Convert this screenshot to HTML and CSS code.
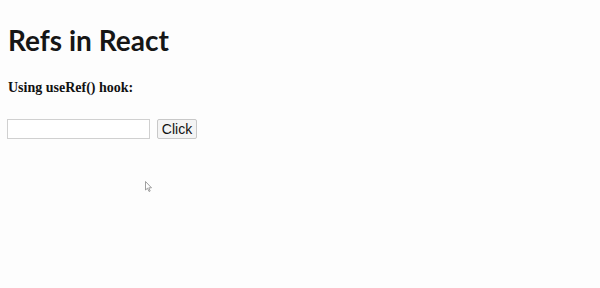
FILE: index.html
```html
<!DOCTYPE html>
<html>
<head>
<meta charset="utf-8">
<link rel="stylesheet" href="styles.css">
</head>
<body>
<div class="app">
  <h1 class="title">Refs in React</h1>
  <h3 class="subtitle">Using useRef() hook:</h3>
  <div class="row">
    <input class="field" type="text">
    <button class="btn">Click</button>
  </div>
</div>
<svg class="cursor" width="8" height="12" viewBox="0 0 8 12"><path d="M0.5 0.5 L0.5 9 L2.5 7.2 L4 10.5 L5.2 10 L3.8 6.8 L6.5 6.8 Z" fill="#fff" stroke="#888" stroke-width="0.8"/></svg>
</body>
</html>
```
FILE: styles.css
```css
html, body { margin: 0; padding: 0; background: #fdfdfd; }
body { width: 600px; height: 288px; overflow: hidden; position: relative; font-family: "Liberation Serif", serif; color: #111; }
.app { padding: 0 8px; }
.title { font-family: Lato, sans-serif; font-weight: bold; font-size: 28px; margin: 0; padding-top: 22px; line-height: 36px; color: #161616; }
.subtitle { font-family: "Liberation Serif", serif; font-weight: bold; font-size: 14px; margin: 0; padding-top: 21px; line-height: 18px; color: #111; }
.row { display: flex; gap: 7px; margin-top: 22px; align-items: center; }
.field { width: 139px; height: 16px; padding: 1px; border: 1px solid #d0d0d0; margin: 0 0 0 -1px; background: #fff; }
.btn { height: 20px; width: 40px; padding: 0; font-family: "Liberation Sans", Arial, sans-serif; font-size: 14px; border: 1px solid #c8c8c8; border-radius: 2px; background: #f4f4f4; color: #111; margin: 0; }
.cursor { position: absolute; left: 145px; top: 181px; }
```
